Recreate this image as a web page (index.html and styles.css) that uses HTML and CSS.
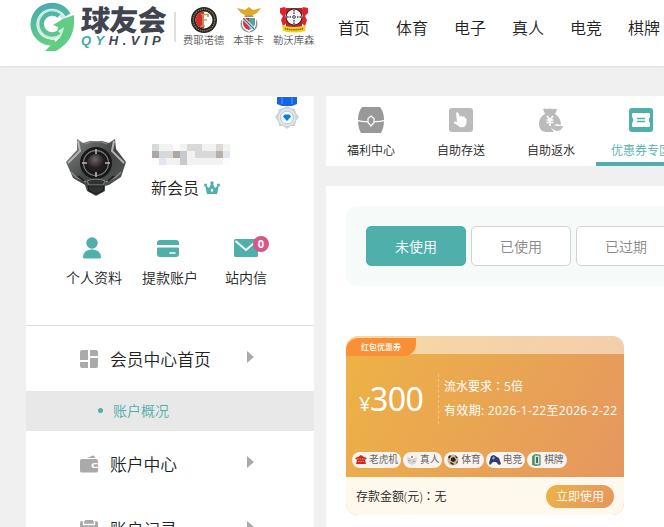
FILE: index.html
```html
<!DOCTYPE html>
<html lang="zh-CN">
<head>
    <meta charset="UTF-8">
    <meta name="viewport" content="width=device-width, initial-scale=1.0">
    <title>球友会 - 会员中心</title>
    <link rel="stylesheet" href="styles.css">
</head>
<body>
    <header class="header">
        <a class="logo">
            <svg class="logo-mark" width="44" height="50" viewBox="0 0 44 50">
                <defs>
                    <linearGradient id="lg" gradientUnits="userSpaceOnUse" x1="10" y1="0" x2="18" y2="44">
                        <stop offset="0" stop-color="#45aab4"/>
                        <stop offset="1" stop-color="#66cf83"/>
                    </linearGradient>
                </defs>
                <circle cx="22" cy="22" r="15" fill="url(#lg)" opacity=".3"/>
                <path d="M38 13A18.500 18.500 0 1 0 25 40.500" fill="none" stroke="url(#lg)" stroke-width="6"/>
                <circle cx="22" cy="22" r="11" fill="#fff"/>
                <path d="M29 14A10.500 10.500 0 1 0 29 30" fill="none" stroke="url(#lg)" stroke-width="4.500"/>
                <path d="M44 13L33 17L23 23L28 25L27 30L34 25C33 33 29 38 22 42L15 49H26C37 43 44 33 44 21Z" fill="#62cc84"/>
            </svg>
            <span class="logo-text">
                <b class="logo-name">球友会</b>
                <i class="logo-url"><em>QY</em>H.VIP</i>
            </span>
        </a>
        <ul class="clubs">
            <li>
                <svg width="26" height="26" viewBox="0 0 26 26">
                    <circle cx="13" cy="13" r="13" fill="#29251f"/>
                    <circle cx="13" cy="13" r="10.8" fill="none" stroke="#968765" stroke-width="1.3" stroke-dasharray="1.2 1"/>
                    <circle cx="13" cy="13" r="8.500" fill="#fff"/>
                    <path d="M13 4.500A8.500 8.500 0 0 0 13 21.500Z" fill="#d8292b"/>
                    <path d="M10 7.500H17V10M12 7.500V19M9.500 19H14M12 13H16" fill="none" stroke="#ba9b58" stroke-width="1.700"/>
                </svg>
                <span>费耶诺德</span>
            </li>
            <li>
                <svg width="26" height="26" viewBox="0 0 26 26">
                    <path d="M1 1L9 3L13 0L17 3L25 1L21 6L17 8L18 11H8L9 8L5 6Z" fill="#dfaa26"/>
                    <circle cx="13" cy="17" r="8.500" fill="#8b969b"/>
                    <path d="M6 10H20V17C20 21 16 23 13 25C9 23 6 21 6 17Z" fill="#fff"/>
                    <path d="M7 11H13V23C9 22 7 19 7 16Z" fill="#d9363a"/>
                    <path d="M13 11H19V16C19 19 17 22 13 23Z" fill="#58a09a"/>
                    <path d="M8 12L18 22" stroke="#fff" stroke-width="3"/>
                    <path d="M8 12L18 22" stroke="#2571a8" stroke-width="1.200"/>
                </svg>
                <span>本菲卡</span>
            </li>
            <li>
                <svg width="28" height="26" viewBox="0 0 28 26">
                    <path d="M0 1L5 0L7 4L5 9L8 15L3 19L1 13L3 9L0 6ZM28 1L23 0L21 4L23 9L20 15L25 19L27 13L25 9L28 6Z" fill="#df2230"/>
                    <path d="M6 1H22V20H6Z" fill="#bd2229"/>
                    <circle cx="14" cy="10" r="8.500" fill="#242424"/>
                    <circle cx="14" cy="10" r="7.500" fill="#f4f4f4"/>
                    <path d="M14 3V17M7 10H21" stroke="#777" stroke-width="2" stroke-dasharray="1.500 1"/>
                    <path d="M2 18Q14 22 26 18L25 24Q14 27 3 24Z" fill="#f0ce23"/>
                    <path d="M5 21.500Q14 24 23 21.500" fill="none" stroke="#7b641b" stroke-width="1.500" stroke-dasharray="1.200 .7"/>
                </svg>
                <span>勒沃库森</span>
            </li>
        </ul>
        <nav class="nav">
            <a>首页</a>
            <a>体育</a>
            <a>电子</a>
            <a>真人</a>
            <a>电竞</a>
            <a>棋牌</a>
        </nav>
    </header>

    <div class="container">
        <aside class="sidebar">
            <div class="profile">
                <svg class="medal" width="24" height="32" viewBox="0 0 24 32">
                    <path d="M2 0H22V7L17 9H7L2 7Z" fill="#1265e3"/>
                    <path d="M7 0V7M17 0V7" stroke="#6694e4" stroke-width="1"/>
                    <path d="M12 9L16 11L20 12L21 16L24 20L21 24L20 29L16 29L12 32L8 29L4 29L3 24L0 20L3 16L4 12L8 11Z" fill="#c9d5dc"/>
                    <circle cx="12" cy="20.500" r="8.500" fill="#e4ebee"/>
                    <circle cx="12" cy="20.500" r="6.500" fill="#f5fafc" stroke="#b7c4cc"/>
                    <path d="M9.500 17.500H14.500L16 19.500L12 24L8 19.500Z" fill="#087cf0"/>
                </svg>
                <div class="user">
                    <svg class="avatar" width="60" height="57" viewBox="0 0 60 57">
                        <defs>
                            <radialGradient id="ball" cx=".45" cy=".3">
                                <stop offset="0" stop-color="#6b6868"/>
                                <stop offset="1" stop-color="#241d1d"/>
                            </radialGradient>
                            <linearGradient id="armor" x1="0" y1="0" x2="1" y2="1">
                                <stop offset="0" stop-color="#858785"/>
                                <stop offset=".5" stop-color="#424443"/>
                                <stop offset="1" stop-color="#5b5d5c"/>
                            </linearGradient>
                        </defs>
                        <path d="M11 0L17 4L24 2H36L43 4L49 0L50 10L60 23L55 38L43 46L39 47V52L30 57L21 52L19 46L7 39L0 23L11 11Z" fill="url(#armor)"/>
                        <path d="M12 2L14 12L2 24M48 2L46 12L58 24" fill="none" stroke="#b3b5b3" stroke-width="2"/>
                        <path d="M5 33L10 38L20 43M55 33L50 38L40 43M19 5Q30 0 41 5" fill="none" stroke="#8d8f8d" stroke-width="1.200"/>
                        <path d="M12 37L18 42M48 37L42 42" stroke="#222423" stroke-width="2"/>
                        <circle cx="30" cy="24" r="16" fill="#181818"/>
                        <circle cx="30" cy="24" r="12.500" fill="#1b1919" stroke="#777" stroke-width="1.300"/>
                        <circle cx="30" cy="24" r="9" fill="url(#ball)"/>
                        <path d="M30 10V15M30 33V38M16 24H21M39 24H44" stroke="#bbb" stroke-width="1.500"/>
                        <path d="M21 42Q30 38 39 42L37 46H23Z" fill="#303131" stroke="#858785"/>
                        <path d="M22 47H38L37 52L30 55L23 52Z" fill="#303231" stroke="#171817"/>
                    </svg>
                    <div class="user-info">
                        <svg class="user-name" width="78" height="21" viewBox="0 0 11 3" preserveAspectRatio="none" shape-rendering="crispEdges">
                            <path d="M0 0H11V3H0Z" fill="#f2f2f2"/>
                            <path d="M0 0h1v1H0zM6 0h1v1H6zM1 1h2v1H1zM6 1h3v1H6z" fill="#d6d8da"/>
                            <path d="M0 1h1v1H0zM3 1h1v1H3z" fill="#ada6a5"/>
                            <path d="M4 1h1v2H4z" fill="#c5cacc"/>
                            <path d="M9 1h1v1H9z" fill="#b9b0a6"/>
                            <path d="M9 0h1v1H9zM5 0h1v1H5z" fill="#dcd8d3"/>
                            <path d="M10 1h1v1h-1zM1 2h1v1H1z" fill="#e2e6f0"/>
                            <path d="M3 0h1v1H3zM0 2h1v1H0zM10 2h1v1h-1z" fill="#fcfcfc"/>
                        </svg>
                        <div class="level">
                            <span>新会员</span>
                            <svg width="16" height="14" viewBox="0 0 16 14">
                                <path d="M1 4L5 7L7 3H9L11 7L15 4L13 13H3Z" fill="#4eafab"/>
                                <g fill="#4eafab"><circle cx="1.500" cy="4" r="1.500"/><circle cx="8" cy="2" r="1.700"/><circle cx="14.500" cy="4" r="1.500"/></g>
                                <path d="M8 7.500L9.500 9L8 11.500L6.500 9Z" fill="#fff"/>
                            </svg>
                        </div>
                    </div>
                </div>
                <div class="shortcuts">
                    <a class="shortcut">
                        <svg width="18" height="22" viewBox="0 0 18 22">
                            <circle cx="9" cy="6" r="5.800" fill="#4eafab"/>
                            <path d="M0 20C0 10 18 10 18 20Q18 21.500 16 21.500H2Q0 21.500 0 20Z" fill="#4eafab"/>
                        </svg>
                        <span>个人资料</span>
                    </a>
                    <a class="shortcut">
                        <svg width="22" height="22" viewBox="0 0 22 22">
                            <path d="M0 8V6Q0 3 3 3H19Q22 3 22 6V8ZM0 10.500H22V17Q22 20 19 20H3Q0 20 0 17Z" fill="#4eafab"/>
                            <path d="M12.500 16H18.500" stroke="#fff" stroke-width="1.500"/>
                        </svg>
                        <span>提款账户</span>
                    </a>
                    <a class="shortcut">
                        <svg width="24" height="22" viewBox="0 0 24 22">
                            <rect y="2" width="24" height="18" rx="1.500" fill="#4eafab"/>
                            <path d="M1.500 4L12 13L22.500 4" fill="none" stroke="#fff" stroke-width="1.800"/>
                        </svg>
                        <span>站内信</span>
                        <b class="badge">0</b>
                    </a>
                </div>
            </div>
            <ul class="menu">
                <li class="menu-item">
                    <svg width="18" height="18" viewBox="0 0 18 18" fill="#aaa">
                        <path d="M2 0H8V10H0V2Q0 0 2 0ZM10 0H16Q18 0 18 2V6H10ZM0 12H8V18H2Q0 18 0 16ZM10 8H18V16Q18 18 16 18H10Z"/>
                    </svg>
                    <span>会员中心首页</span>
                </li>
                <li class="submenu-item">账户概况</li>
                <li class="menu-item">
                    <svg width="18" height="18" viewBox="0 0 18 18" fill="#aaa">
                        <path d="M7 3L13 .5Q15 0 15 3ZM2 4H16Q18 4 18 6V8H14Q11.500 8 11.500 10.500Q11.500 13 14 13H18V16Q18 17.500 16 17.500H2Q0 17.500 0 16V6Q0 4 2 4Z"/>
                        <path d="M14 9.300H18V11.700H14Q12.700 10.500 14 9.300Z"/>
                    </svg>
                    <span>账户中心</span>
                </li>
                <li class="menu-item">
                    <svg width="18" height="18" viewBox="0 0 18 18">
                        <path d="M2 1H16Q18 1 18 3V18H0V3Q0 1 2 1Z" fill="#aaa"/>
                        <path d="M3.500 1V4.500H14.500V1" fill="none" stroke="#fff" stroke-width="1.300"/>
                        <path d="M4 8H14M4 12H14" stroke="#fff" stroke-width="1.500"/>
                        <path d="M5 0H13V3H5Z" fill="#aaa"/>
                    </svg>
                    <span>账户记录</span>
                </li>
            </ul>
        </aside>

        <main class="main">
            <nav class="tabs">
                <a class="tab">
                    <svg width="26" height="26" viewBox="0 0 26 26">
                        <path d="M4 0H22Q26 5 26 13Q26 21 23 26H3Q0 21 0 13Q0 5 4 0Z" fill="#999"/>
                        <path d="M0 13.500Q5 15 9.500 14.500M16.500 14.500Q21 15 26 13.500M13 9L10 11.500V15.500L13 19L16 15.500V11.500Z" fill="none" stroke="#fff" stroke-width="1.200"/>
                    </svg>
                    <span>福利中心</span>
                </a>
                <a class="tab">
                    <svg width="24" height="24" viewBox="0 0 24 24">
                        <rect width="24" height="24" rx="3" fill="#bbb"/>
                        <path d="M7 5Q8.500 3.500 9.500 5L11 9L12 7.500L13.500 9L15 8L16 10Q18 9.500 17.500 14L17 17Q15 20 11 19L5 15Q4 12.500 8 14Z" fill="#fff"/>
                    </svg>
                    <span>自助存送</span>
                </a>
                <a class="tab">
                    <svg width="24" height="24" viewBox="0 0 24 24">
                        <path d="M4 1Q6 0 8 1Q11 0 14 1Q17 0 18 2L16 6Q22 10 22 17L17 16L12 20L15 24H7Q0 23 0 16Q0 9 6 6Z" fill="#bbb"/>
                        <path d="M8 8L11 12L14 8M7.500 12H14.500M7.500 14.500H14.500M11 12V18" fill="none" stroke="#fff" stroke-width="1.600"/>
                        <path d="M12 20Q15 16 18 18H24Q23 23 17 23Z" fill="#bbb"/>
                    </svg>
                    <span>自助返水</span>
                </a>
                <a class="tab active">
                    <svg width="24" height="24" viewBox="0 0 24 24">
                        <rect width="24" height="24" rx="3" fill="#4eafab"/>
                        <path d="M4 5H20Q21 5 21 6V9Q18.500 12 21 15V18Q21 19 20 19H4Q3 19 3 18V15Q5.500 12 3 9V6Q3 5 4 5Z" fill="#fff"/>
                        <path d="M8 10.500H16M8 13.500H16" stroke="#4eafab" stroke-width="1.400"/>
                    </svg>
                    <span>优惠券专区</span>
                </a>
            </nav>

            <section class="panel">
                <div class="filters">
                    <button class="filter selected">未使用</button>
                    <button class="filter">已使用</button>
                    <button class="filter">已过期</button>
                </div>

                <div class="coupon">
                    <div class="coupon-top">
                        <span class="coupon-tag">红包优惠券</span>
                    </div>
                    <div class="coupon-body">
                        <div class="coupon-detail">
                            <div class="amount"><small>¥</small>300</div>
                            <div class="rules">
                                <p>流水要求<span class="colon" lang="zh-TW">：</span>5倍</p>
                                <p class="expiry">有效期: 2026-1-22至2026-2-22</p>
                            </div>
                        </div>
                        <ul class="games">
                            <li>
                                <svg width="12" height="10" viewBox="0 0 12 10"><path d="M0 3L3 2L6 0L9 2L12 3L10 5L11 9H1L2 5Z" fill="#cf281d"/><path d="M2 4H10M3 6.500H9" stroke="#ee9a6c" stroke-dasharray="1.500 1"/></svg>
                                老虎机
                            </li>
                            <li>
                                <svg width="12" height="12" viewBox="0 0 12 12"><path d="M1 3L6 1L11 3L10 9L6 11L2 9Z" fill="#d3d3d3"/><path d="M1 3L6 5L11 3L6 1Z" fill="#f5f5f5"/><circle cx="6" cy="3" r="1" fill="#dc5148"/><path d="M3 6V7M8 7V8" stroke="#777"/></svg>
                                真人
                            </li>
                            <li>
                                <svg width="12" height="12" viewBox="0 0 12 12"><circle cx="6" cy="6" r="5.500" fill="#c9b594"/><path d="M4 4L7 3L9 6L7 8L4 7ZM1 3L3 1L4 2L2 5ZM8 1L11 4L9 4ZM3 9L6 11L7 10L4 8ZM10 7L11 8L9 10Z" fill="#2d211a"/></svg>
                                体育
                            </li>
                            <li>
                                <svg width="12" height="12" viewBox="0 0 12 12"><path d="M2 2L5 1L8 3L10 4L12 10L10 11L7 8L4 8L1 11L0 9Z" fill="#303c78"/><path d="M3 4H6M4.500 2.500V5.500" stroke="#9ba4cb"/></svg>
                                电竞
                            </li>
                            <li>
                                <svg width="12" height="12" viewBox="0 0 12 12"><path d="M2 2L7 0V12L2 11Z" fill="#48a878"/><path d="M4 1H10V11H4Z" fill="#d7e1da" stroke="#327659"/><path d="M6 3H8V9H6Z" fill="#47735e"/></svg>
                                棋牌
                            </li>
                        </ul>
                    </div>
                    <div class="coupon-foot">
                        <span>存款金额(元)<span class="colon" lang="zh-TW">：</span>无</span>
                        <button class="use">立即使用</button>
                    </div>
                </div>
            </section>
        </main>
    </div>
</body>
</html>
```

FILE: styles.css
```css
* {
    box-sizing: border-box;
}

body {
    margin: 0;
    height: 527px;
    overflow: hidden;
    background-color: #f0f0f0;
    color: #222;
    font-family: "Open Sans", "Noto Sans CJK SC", sans-serif;
    font-size: 14px;
    font-weight: 350;
}

ul {
    list-style: none;
    margin: 0;
    padding: 0;
}

p {
    margin: 0;
}

svg {
    display: block;
    flex-shrink: 0;
}

button {
    font-family: inherit;
    font-weight: inherit;
    padding: 0;
    cursor: pointer;
}

/* header */
.header {
    display: flex;
    height: 66px;
    padding-left: 30px;
    background-color: #fff;
    box-shadow: 0 1px 2px #ddd;
}

.logo {
    display: flex;
    width: 146px;
    height: 30px;
    margin-top: 12px;
    border-right: 2px solid #e0e0e0;
}

.logo-mark {
    margin-top: -10px;
}

.logo-text {
    display: flex;
    flex-direction: column;
    margin: -7px 0 0 7px;
    white-space: nowrap;
}

.logo-name {
    color: #41434f;
    font-size: 29px;
    font-weight: 900;
    line-height: 30px;
    letter-spacing: -0.7px;
    transform: skewX(-3deg);
}

.logo-url {
    color: #41434f;
    font-family: "Liberation Sans", sans-serif;
    font-size: 13px;
    font-weight: bold;
    line-height: 12px;
    letter-spacing: 4.5px;
}

.logo-url em {
    color: #41aaa5;
}

.clubs {
    display: flex;
    gap: 9px;
    width: 154px;
    padding: 7px 0 0 7px;
}

.clubs li {
    display: flex;
    flex-direction: column;
    align-items: center;
    color: #555;
    font-size: 10.3px;
    line-height: 14px;
    white-space: nowrap;
}

.nav {
    display: flex;
    gap: 26px;
    padding-left: 8px;
    font-size: 16px;
    line-height: 56px;
    white-space: nowrap;
}

/* layout */
.container {
    display: flex;
    gap: 12px;
    padding: 30px 0 0 26px;
}

.sidebar {
    flex: 0 0 288px;
    height: 431px;
    overflow: hidden;
    background-color: #fff;
}

.main {
    flex: 1;
    min-width: 0;
    overflow: hidden;
}

/* profile */
.profile {
    position: relative;
    height: 230px;
    border-bottom: 1px solid #ddd;
}

.medal {
    position: absolute;
    top: 1px;
    right: 15px;
}

.user {
    display: flex;
    gap: 25px;
    padding: 43px 0 0 40px;
}

.user-info {
    padding-top: 5px;
}

.user-name {
    margin-left: 1px;
}

.level {
    display: flex;
    align-items: center;
    gap: 5px;
    margin-top: 11px;
    font-size: 16px;
    line-height: 24px;
}

.shortcuts {
    display: flex;
    padding: 37px 0 0 30px;
}

.shortcut {
    position: relative;
    display: flex;
    flex-direction: column;
    align-items: center;
    gap: 9px;
    width: 76px;
    line-height: 20px;
}

.shortcut svg {
    margin-right: 5px;
}

.shortcut:last-child svg {
    margin: 0;
}

.badge {
    position: absolute;
    top: -1px;
    left: 45px;
    width: 16px;
    height: 16px;
    border-radius: 50%;
    background-color: #da5587;
    color: #fff;
    font-size: 11px;
    font-weight: bold;
    line-height: 16px;
    text-align: center;
}

/* side menu */
.menu-item {
    display: flex;
    align-items: center;
    height: 65px;
    padding: 0 60px 0 54px;
    font-size: 16.8px;
}

.menu-item span {
    flex: 1;
    margin: 0 0 0 12px;
}

.menu-item::after {
    content: "";
    border: 6px solid transparent;
    border-left: 7px solid #aaa;
    border-right: 0;
    margin-top: -3px;
}

.submenu-item {
    display: flex;
    align-items: center;
    height: 40px;
    padding: 0 0 2px 72px;
    background-color: #e8e8e8;
    color: #4eafab;
}

.submenu-item::before {
    content: "";
    width: 5px;
    height: 5px;
    margin-right: 10px;
    border-radius: 50%;
    background-color: #4eafab;
}

/* top tabs */
.tabs {
    display: flex;
    height: 70px;
    background-color: #fff;
}

.tab {
    display: flex;
    flex: 0 0 90px;
    flex-direction: column;
    align-items: center;
    justify-content: space-between;
    padding: 12px 0 3px;
    border-bottom: 4px solid transparent;
    font-size: 12px;
    line-height: 16px;
}

.tab:first-child {
    padding-top: 11px;
}

.tab.active {
    border-color: #4eafab;
    color: #4eafab;
}

/* coupons */
.panel {
    height: 341px;
    margin-top: 20px;
    padding: 20px 0 0 20px;
    background-color: #fff;
}

.filters {
    display: flex;
    gap: 5px;
    height: 80px;
    padding: 20px;
    border-radius: 10px 0 0 10px;
    background-color: #f6faf9;
}

.filter {
    flex: 0 0 100px;
    height: 40px;
    border: 1px solid #d2d2d2;
    border-radius: 5px;
    background-color: #fff;
    color: #888;
    font-size: 14px;
}

.filter.selected {
    border-color: #4eafab;
    background-color: #4eafab;
    color: #fff;
}

.coupon {
    width: 278px;
    height: 179px;
    margin-top: 50px;
    overflow: hidden;
    border-radius: 12px;
    background: linear-gradient(120deg, #edb345, #e59562);
    color: #fff;
    font-size: 12px;
    font-weight: 400;
}

.coupon-top {
    height: 18px;
    padding-top: 2px;
    background-color: rgba(255, 255, 255, 0.5);
}

.coupon-tag {
    display: block;
    width: 70px;
    height: 18px;
    border-radius: 12px 0 12px 0;
    background-color: #f99036;
    font-size: 8px;
    font-weight: 500;
    line-height: 18px;
    text-align: center;
}

.coupon-body {
    height: 123px;
    padding-top: 20px;
}

.coupon-detail {
    display: flex;
    height: 50px;
}

.amount {
    width: 93px;
    padding-left: 13px;
    border-right: 1px dashed rgba(255, 255, 255, 0.35);
    font-family: "Noto Sans", sans-serif;
    font-size: 32px;
    line-height: 50px;
    letter-spacing: -0.5px;
}

.amount small {
    font-size: 20px;
}

.rules {
    margin-top: 1px;
    padding-left: 5px;
    line-height: 24px;
    white-space: nowrap;
}

.rules .expiry {
    letter-spacing: 0.32px;
}

/* full-width colon sits in the middle of its box */
.colon {
    font-family: "Noto Sans CJK TC", sans-serif;
    line-height: 1;
}

.games {
    display: flex;
    gap: 2px;
    padding: 28px 0 0 6px;
}

.games li {
    display: flex;
    align-items: center;
    gap: 2px;
    height: 16px;
    padding: 0 3px;
    border-radius: 8px;
    background-color: #f8f3ee;
    color: #666;
    font-size: 9.7px;
    line-height: 16px;
    white-space: nowrap;
}

.coupon-foot {
    display: flex;
    align-items: center;
    justify-content: space-between;
    height: 38px;
    padding: 0 10px;
    background-color: #fff8ec;
    color: #222;
    font-weight: 350;
}

.use {
    width: 68px;
    height: 23px;
    border: 0;
    border-radius: 12px;
    background: linear-gradient(120deg, #edb345, #e59562);
    color: #fff;
    font-size: 12px;
}
```
